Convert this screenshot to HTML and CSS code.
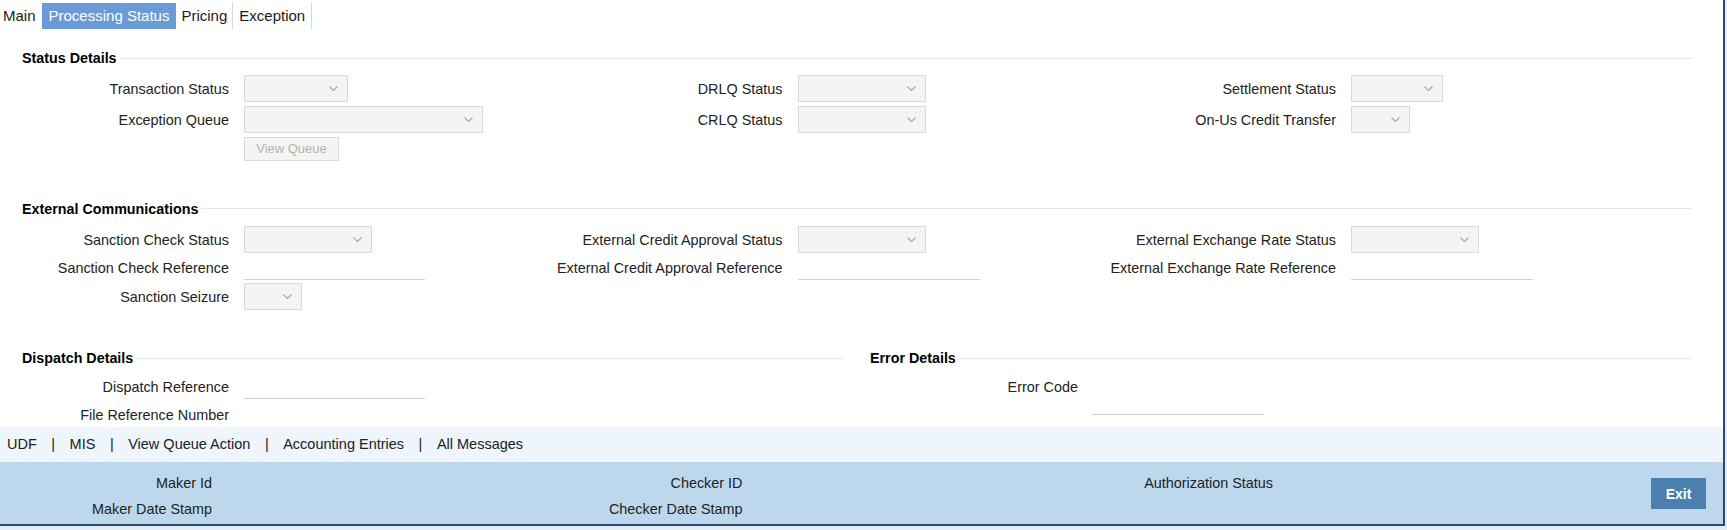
FILE: index.html
```html
<!DOCTYPE html>
<html lang="en">
<head>
<meta charset="utf-8">
<title>Processing Status</title>
<link rel="stylesheet" href="styles.css">
</head>
<body>
<div class="frame">
  <div class="content">
    <nav class="tabs">
      <span class="tab tab-first">Main</span>
      <span class="tab tab-active">Processing Status</span>
      <span class="tab tab-sep tab-pricing">Pricing</span>
      <span class="tab tab-sep">Exception</span>
    </nav>
    <div class="body">
      <section class="sec sec-status">
        <h3 class="sec-head"><span>Status Details</span></h3>
        <div class="grid3 fields">
          <div class="col">
            <div class="row"><span class="lbl">Transaction Status</span><span class="sel w104"><svg viewBox="0 0 9 5"><polyline points="0.5,0.5 4.5,4.5 8.5,0.5"/></svg></span></div>
            <div class="row"><span class="lbl">Exception Queue</span><span class="sel w239"><svg viewBox="0 0 9 5"><polyline points="0.5,0.5 4.5,4.5 8.5,0.5"/></svg></span></div>
            <div class="row row-top"><span class="lbl"></span><span class="btn-off">View Queue</span></div>
          </div>
          <div class="col">
            <div class="row"><span class="lbl">DRLQ Status</span><span class="sel w128"><svg viewBox="0 0 9 5"><polyline points="0.5,0.5 4.5,4.5 8.5,0.5"/></svg></span></div>
            <div class="row"><span class="lbl">CRLQ Status</span><span class="sel w128"><svg viewBox="0 0 9 5"><polyline points="0.5,0.5 4.5,4.5 8.5,0.5"/></svg></span></div>
          </div>
          <div class="col">
            <div class="row"><span class="lbl">Settlement Status</span><span class="sel w92"><svg viewBox="0 0 9 5"><polyline points="0.5,0.5 4.5,4.5 8.5,0.5"/></svg></span></div>
            <div class="row"><span class="lbl">On-Us Credit Transfer</span><span class="sel w59"><svg viewBox="0 0 9 5"><polyline points="0.5,0.5 4.5,4.5 8.5,0.5"/></svg></span></div>
          </div>
        </div>
      </section>

      <section class="sec sec-ext">
        <h3 class="sec-head"><span>External Communications</span></h3>
        <div class="grid3 fields">
          <div class="col">
            <div class="row"><span class="lbl">Sanction Check Status</span><span class="sel w128"><svg viewBox="0 0 9 5"><polyline points="0.5,0.5 4.5,4.5 8.5,0.5"/></svg></span></div>
            <div class="row"><span class="lbl">Sanction Check Reference</span><span class="txt w181"></span></div>
            <div class="row"><span class="lbl">Sanction Seizure</span><span class="sel w58"><svg viewBox="0 0 9 5"><polyline points="0.5,0.5 4.5,4.5 8.5,0.5"/></svg></span></div>
          </div>
          <div class="col">
            <div class="row"><span class="lbl">External Credit Approval Status</span><span class="sel w128"><svg viewBox="0 0 9 5"><polyline points="0.5,0.5 4.5,4.5 8.5,0.5"/></svg></span></div>
            <div class="row"><span class="lbl">External Credit Approval Reference</span><span class="txt w182"></span></div>
          </div>
          <div class="col">
            <div class="row"><span class="lbl">External Exchange Rate Status</span><span class="sel w128"><svg viewBox="0 0 9 5"><polyline points="0.5,0.5 4.5,4.5 8.5,0.5"/></svg></span></div>
            <div class="row"><span class="lbl">External Exchange Rate Reference</span><span class="txt w182"></span></div>
          </div>
        </div>
      </section>

      <div class="grid2">
        <section class="sec sec-dispatch">
          <h3 class="sec-head"><span>Dispatch Details</span></h3>
          <div class="fields">
            <div class="row"><span class="lbl">Dispatch Reference</span><span class="txt w181"></span></div>
            <div class="row row-top"><span class="lbl">File Reference Number</span><span class="txt txt-low w181"></span></div>
          </div>
        </section>
        <section class="sec sec-error">
          <h3 class="sec-head"><span>Error Details</span></h3>
          <div class="fields">
            <div class="row row-top"><span class="lbl lbl-err">Error Code</span><span class="area w172"></span></div>
          </div>
        </section>
      </div>
    </div>
  </div>

  <div class="linkbar">
    <span>UDF</span><span class="pipe">|</span><span>MIS</span><span class="pipe">|</span><span>View Queue Action</span><span class="pipe">|</span><span>Accounting Entries</span><span class="pipe">|</span><span>All Messages</span>
  </div>

  <div class="footer">
    <div class="audit">
      <div class="acol"><span class="alabel">Maker Id</span><span class="alabel">Maker Date Stamp</span></div>
      <div class="acol"><span class="alabel">Checker ID</span><span class="alabel">Checker Date Stamp</span></div>
      <div class="acol"><span class="alabel">Authorization Status</span></div>
    </div>
    <button class="exit" type="button">Exit</button>
  </div>
</div>
</body>
</html>
```

FILE: styles.css
```css
body {
  margin: 0;
  background: #e4edf6;
  font-family: "Liberation Sans", Arial, sans-serif;
  font-size: 14.4px;
  color: #222;
}

.frame {
  width: 1725px;
  height: 526px;
  box-sizing: border-box;
  border-right: 2px solid #284a73;
  border-bottom: 2px solid #284a73;
  background: #fff;
  display: flex;
  flex-direction: column;
}

.content {
  height: 427px;
  flex: none;
  overflow: hidden;
}

/* tabs */
.tabs {
  display: flex;
  margin-top: 3px;
  height: 26px;
  font-size: 15px;
  line-height: 26px;
  color: #1a1a1a;
}
.tab { padding: 0 6px; white-space: nowrap; }
.tab-first { padding-left: 3px; }
.tab-active { background: #6b9bd6; color: #fff; padding: 0 7px; }
.tab-sep { border-right: 1px solid #d6d6d6; }
.tab-pricing { padding: 0 5px; }

/* body */
.body { padding: 0 31px 0 22px; }

.sec-head {
  display: flex;
  align-items: center;
  margin: 0;
  height: 16px;
  font-size: 14.3px;
  line-height: 16px;
  font-weight: bold;
  color: #000;
  white-space: nowrap;
}
.sec-head::after {
  content: "";
  flex: 1;
  border-top: 1px solid #e6e6e6;
  margin-left: 3px;
}

.sec-status .sec-head { margin-top: 21px; }
.sec-status .fields { margin-top: 7px; }
.sec-status .row { height: 31px; }

.sec-ext .sec-head { margin-top: 34.5px; }
.sec-ext .fields { margin-top: 8.75px; }
.sec-ext .row { height: 28.5px; }

.grid2 {
  display: grid;
  grid-template-columns: 821px 822px;
  column-gap: 27px;
  margin-top: 39.5px;
}
.sec-dispatch .fields, .sec-error .fields { margin-top: 7px; }
.sec-dispatch .row, .sec-error .row { height: 28px; }

.grid3 {
  display: grid;
  grid-template-columns: repeat(3, 553.5px);
}
.col { display: flex; flex-direction: column; }

.row { display: flex; align-items: center; }
.row-top { align-items: flex-start; }

.lbl {
  width: 207px;
  flex: none;
  margin-right: 15px;
  display: flex;
  justify-content: flex-end;
  white-space: nowrap;
  line-height: 28px;
}
.lbl-err { width: 208px; margin-right: 14px; }

.sel {
  box-sizing: border-box;
  height: 27px;
  flex: none;
  background: #f4f4f2;
  border: 1px solid #dadada;
  display: flex;
  align-items: center;
  justify-content: flex-end;
  padding-right: 9px;
}
.sel svg { width: 9px; height: 5px; display: block; }
.sel polyline { fill: none; stroke: #a8a8a8; stroke-width: 1.1; }

.txt {
  box-sizing: border-box;
  height: 24px;
  flex: none;
  border-bottom: 1px solid #d2d2d2;
}
.txt-low { margin-top: 8px; }
.area {
  box-sizing: border-box;
  height: 40px;
  margin-top: 2px;
  flex: none;
  border-bottom: 1px solid #d2d2d2;
}

.btn-off {
  box-sizing: border-box;
  width: 95px;
  height: 24px;
  margin-top: 2px;
  background: #f4f4f2;
  border: 1px solid #dadada;
  color: #b3b3b3;
  font-size: 13px;
  line-height: 22px;
  text-align: center;
}

.w58 { width: 58px; }
.w59 { width: 59px; }
.w92 { width: 92px; }
.w104 { width: 104px; }
.w128 { width: 128px; }
.w172 { width: 172px; }
.w181 { width: 181px; }
.w182 { width: 182px; }
.w239 { width: 239px; }

/* link bar */
.linkbar {
  height: 35px;
  flex: none;
  background: #eef5fc;
  padding-left: 7px;
  font-size: 14.5px;
  line-height: 35px;
  color: #222;
  white-space: nowrap;
}
.pipe { margin: 0 14.5px; }

/* footer */
.footer {
  flex: 1;
  background: #bdd7ec;
  display: flex;
  align-items: flex-start;
  padding-top: 8px;
  box-sizing: border-box;
}
.audit {
  display: grid;
  grid-template-columns: repeat(3, 530.5px);
}
.acol { display: flex; flex-direction: column; }
.alabel {
  width: 212px;
  text-align: right;
  line-height: 26px;
  white-space: nowrap;
}
.exit {
  margin: 8px 17px 0 auto;
  width: 55px;
  height: 31px;
  border: none;
  background: #4a7fae;
  color: #fff;
  font-family: "Liberation Sans", Arial, sans-serif;
  font-size: 14px;
  font-weight: bold;
  padding: 0;
}
```
